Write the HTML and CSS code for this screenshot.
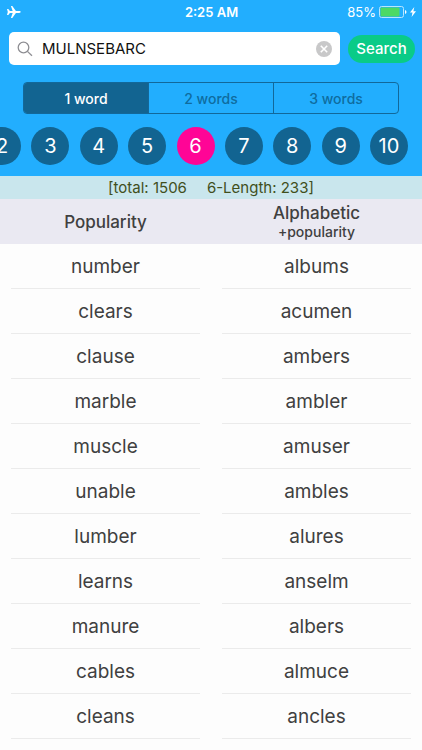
FILE: index.html
```html
<!DOCTYPE html>
<html lang="en">
<head>
    <meta charset="UTF-8">
    <meta name="viewport" content="width=device-width, initial-scale=1">
    <title>Word Finder</title>
    <link rel="stylesheet" href="styles.css">
</head>
<body>
<header>
    <div class="status-bar">
        <div class="status-left">
            <svg class="plane" viewBox="0 0 14 12">
                <path d="M0 3h1.3l1.6 2.1h2.8L3.9 0h1.4l3.6 5.1h3.3c2 0 2 1.8 0 1.8H8.9L5.3 12H3.9l1.8-5.1H2.9L1.3 9H0l.8-3z"/>
            </svg>
        </div>
        <span class="time">2:25 AM</span>
        <div class="status-right">
            <span>85%</span>
            <svg class="battery" viewBox="0 0 28 12">
                <rect x=".5" y=".5" width="24" height="11" rx="2" fill="none" stroke="#b9e6ff"/>
                <rect x="1.5" y="1.5" width="19" height="9" rx="1" fill="#4cd964"/>
                <path d="M26 4c2 .8 2 3.2 0 4z" fill="#fff"/>
            </svg>
            <svg class="bolt" viewBox="0 0 6 10">
                <path d="M4.3 0L0 5.6h2.5L1.6 10 6 4.2H3.4z"/>
            </svg>
        </div>
    </div>

    <form class="search">
        <div class="search-box">
            <svg class="glass" viewBox="0 0 16 16">
                <circle cx="6.5" cy="6.5" r="5.3"/>
                <path d="M10.4 10.4l4.6 4.4"/>
            </svg>
            <input type="text" class="letters" aria-label="Letters" value="MULNSEBARC">
            <button type="reset" class="clear" aria-label="Clear">
                <svg viewBox="0 0 16 16">
                    <circle cx="8" cy="8" r="8" fill="#c8c8c9"/>
                    <path d="M4.8 4.8l6.4 6.4M11.2 4.8l-6.4 6.4" stroke="#fff" stroke-width="1.6"/>
                </svg>
            </button>
        </div>
        <button type="button" class="btn-search">Search</button>
    </form>

    <div class="tabs">
        <button class="tab active">1 word</button>
        <button class="tab">2 words</button>
        <button class="tab">3 words</button>
    </div>

    <nav class="lengths">
        <button class="length">2</button>
        <button class="length">3</button>
        <button class="length">4</button>
        <button class="length">5</button>
        <button class="length active">6</button>
        <button class="length">7</button>
        <button class="length">8</button>
        <button class="length">9</button>
        <button class="length">10</button>
    </nav>
</header>

<div class="totals"><span>[total: 1506</span><span>6-Length: 233]</span></div>

<table class="words">
    <thead>
    <tr>
        <th>Popularity</th>
        <th>Alphabetic<small>+popularity</small></th>
    </tr>
    </thead>
    <tbody>
    <tr><td><span>number</span></td><td><span>albums</span></td></tr>
    <tr><td><span>clears</span></td><td><span>acumen</span></td></tr>
    <tr><td><span>clause</span></td><td><span>ambers</span></td></tr>
    <tr><td><span>marble</span></td><td><span>ambler</span></td></tr>
    <tr><td><span>muscle</span></td><td><span>amuser</span></td></tr>
    <tr><td><span>unable</span></td><td><span>ambles</span></td></tr>
    <tr><td><span>lumber</span></td><td><span>alures</span></td></tr>
    <tr><td><span>learns</span></td><td><span>anselm</span></td></tr>
    <tr><td><span>manure</span></td><td><span>albers</span></td></tr>
    <tr><td><span>cables</span></td><td><span>almuce</span></td></tr>
    <tr><td><span>cleans</span></td><td><span>ancles</span></td></tr>
    </tbody>
</table>
</body>
</html>
```

FILE: styles.css
```css
* {
    box-sizing: border-box;
}

body {
    margin: 0;
    background: #fdfdfd;
    color: #404040;
    font-family: Inter, "Liberation Sans", sans-serif;
}

button, input {
    margin: 0;
    padding: 0;
    border: 0;
    background: none;
    font-family: inherit;
}

header {
    background: #22aefe;
    padding-bottom: 11px;
    overflow: hidden;
}

.status-bar {
    display: grid;
    grid-template-columns: 1fr auto 1fr;
    align-items: center;
    height: 24px;
    padding: 0 6px 0 7px;
    color: #fff;
    font-size: 13px;
}

.status-left, .status-right {
    display: flex;
    align-items: center;
}

.status-right {
    justify-content: flex-end;
    gap: 3px;
}

.time {
    font-weight: 600;
}

.plane {
    width: 14px;
    height: 12px;
    fill: #fff;
}

.battery {
    width: 28px;
    height: 12px;
}

.bolt {
    width: 6px;
    height: 10px;
    fill: #fff;
}

.search {
    display: flex;
    align-items: center;
    gap: 8px;
    margin: 8px 7px 0 9px;
}

.search-box {
    flex: 1;
    display: flex;
    align-items: center;
    height: 33px;
    padding: 0 8px;
    border-radius: 5px;
    background: #fff;
}

.glass {
    width: 16px;
    height: 16px;
    fill: none;
    stroke: #8e8e93;
    stroke-width: 1.3;
}

.letters {
    flex: 1;
    min-width: 0;
    margin-left: 9px;
    color: #111;
    font-size: 15px;
    outline: 0;
}

.clear, .clear svg {
    display: block;
    width: 16px;
    height: 16px;
}

.btn-search {
    width: 67px;
    height: 28px;
    border-radius: 14px;
    background: #0acb87;
    color: #fff;
    font-size: 15px;
    font-weight: 500;
}

.tabs {
    display: flex;
    height: 32px;
    margin: 17px 23px 0;
    border: 1px solid #12689a;
    border-radius: 4px;
    overflow: hidden;
}

.tab {
    flex: 1;
    color: #0f6c9f;
    font-size: 14px;
    font-weight: 500;
}

.tab + .tab {
    border-left: 1px solid #12689a;
}

.tab.active {
    background: #126491;
    color: #fff;
}

.lengths {
    display: flex;
    justify-content: space-between;
    margin: 13px 14px 0 -17px;
}

.length {
    width: 38px;
    height: 38px;
    border-radius: 50%;
    background: #126491;
    color: #fff;
    font-size: 20px;
}

.length.active {
    background: #ff0596;
}

.totals {
    display: flex;
    justify-content: center;
    gap: 20px;
    background: #c9e6ed;
    color: #414f1c;
    font-size: 15px;
    line-height: 23px;
}

.words {
    width: 100%;
    table-layout: fixed;
    border-collapse: collapse;
    text-align: center;
}

.words th {
    height: 45px;
    padding: 0;
    background: #eae9f2;
    font-size: 17px;
    font-weight: 500;
    line-height: 20px;
}

.words small {
    display: block;
    font-size: 14px;
    line-height: 18px;
}

.words td {
    padding: 0 11px;
    font-size: 19px;
}

.words td span {
    display: block;
    padding-top: 2px;
    border-bottom: 1px solid #ebebeb;
    line-height: 42px;
}
```
